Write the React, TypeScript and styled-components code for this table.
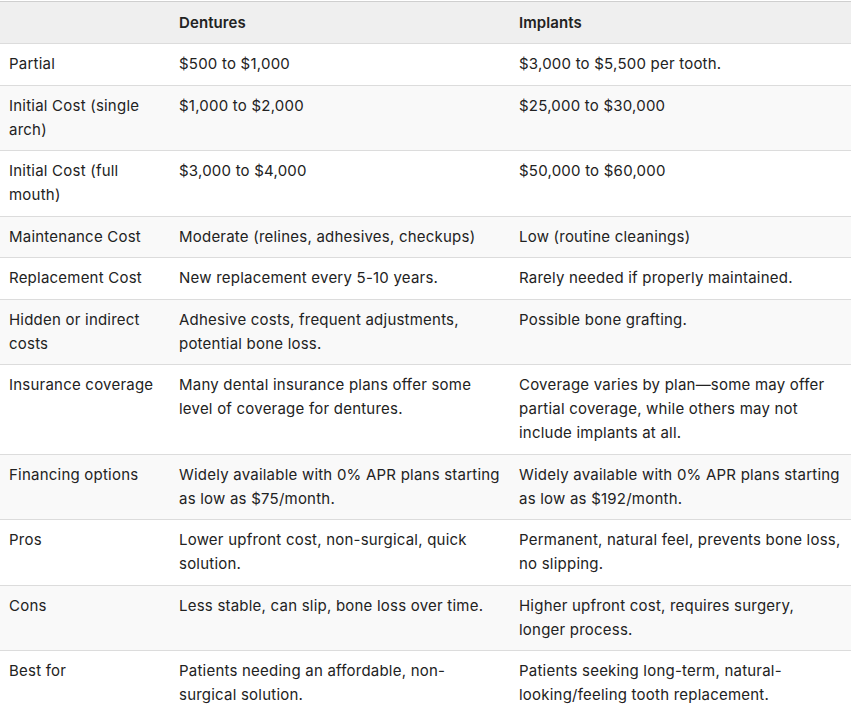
import React from 'react';
import styled, { createGlobalStyle } from 'styled-components';

const GlobalStyle = createGlobalStyle`
  body {
    margin: 0;
    background: #fff;
    font-family: Inter, 'Noto Sans', sans-serif;
    color: #222222;
  }
`;

const Table = styled.table`
  width: 851px;
  margin-top: 1px;
  border-collapse: collapse;
  table-layout: fixed;
  font-size: 15px;
  line-height: 24px;
  letter-spacing: 0.22px;
`;

const HeadRow = styled.tr`
  background: #efefef;
  border-top: 1px solid #cfcfcf;
  border-bottom: 1px solid #dcdcdc;
`;

const HeadCell = styled.th`
  text-align: left;
  font-weight: 600;
  padding: 8.5px 9px;
  vertical-align: top;
  letter-spacing: 0.1px;
`;

const Row = styled.tr<{ $shaded: boolean }>`
  background: ${({ $shaded }) => ($shaded ? '#f9f9f9' : '#ffffff')};
  border-bottom: 1px solid #dcdcdc;
`;

const Cell = styled.td`
  padding: 8.25px 9px;
  vertical-align: top;
  font-weight: 400;
`;

const rows: [string, string, string][] = [
  ['Partial', '$500 to $1,000', '$3,000 to $5,500 per tooth.'],
  ['Initial Cost (single arch)', '$1,000 to $2,000', '$25,000 to $30,000'],
  ['Initial Cost (full mouth)', '$3,000 to $4,000', '$50,000 to $60,000'],
  ['Maintenance Cost', 'Moderate (relines, adhesives, checkups)', 'Low (routine cleanings)'],
  ['Replacement Cost', 'New replacement every 5-10 years.', 'Rarely needed if properly maintained.'],
  ['Hidden or indirect costs', 'Adhesive costs, frequent adjustments, potential bone loss.', 'Possible bone grafting.'],
  [
    'Insurance coverage',
    'Many dental insurance plans offer some level of coverage for dentures.',
    'Coverage varies by plan\u2014some may offer partial coverage, while others may not include implants at all.',
  ],
  [
    'Financing options',
    'Widely available with 0% APR plans starting as low as $75/month.',
    'Widely available with 0% APR plans starting as low as $192/month.',
  ],
  [
    'Pros',
    'Lower upfront cost, non-surgical, quick solution.',
    'Permanent, natural feel, prevents bone loss, no slipping.',
  ],
  ['Cons', 'Less stable, can slip, bone loss over time.', 'Higher upfront cost, requires surgery, longer process.'],
  [
    'Best for',
    'Patients needing an affordable, non-surgical solution.',
    'Patients seeking long-term, natural-looking/feeling tooth replacement.',
  ],
];

const App: React.FC = () => {
  return (
    <>
      <GlobalStyle />
      <Table>
        <colgroup>
          <col style={{ width: 170 }} />
          <col style={{ width: 340 }} />
          <col style={{ width: 341 }} />
        </colgroup>
        <thead>
          <HeadRow>
            <HeadCell></HeadCell>
            <HeadCell>Dentures</HeadCell>
            <HeadCell>Implants</HeadCell>
          </HeadRow>
        </thead>
        <tbody>
          {rows.map((r, i) => (
            <Row key={r[0]} $shaded={i % 2 === 1}>
              <Cell>{r[0]}</Cell>
              <Cell>{r[1]}</Cell>
              <Cell>{r[2]}</Cell>
            </Row>
          ))}
        </tbody>
      </Table>
    </>
  );
};

export default App;
